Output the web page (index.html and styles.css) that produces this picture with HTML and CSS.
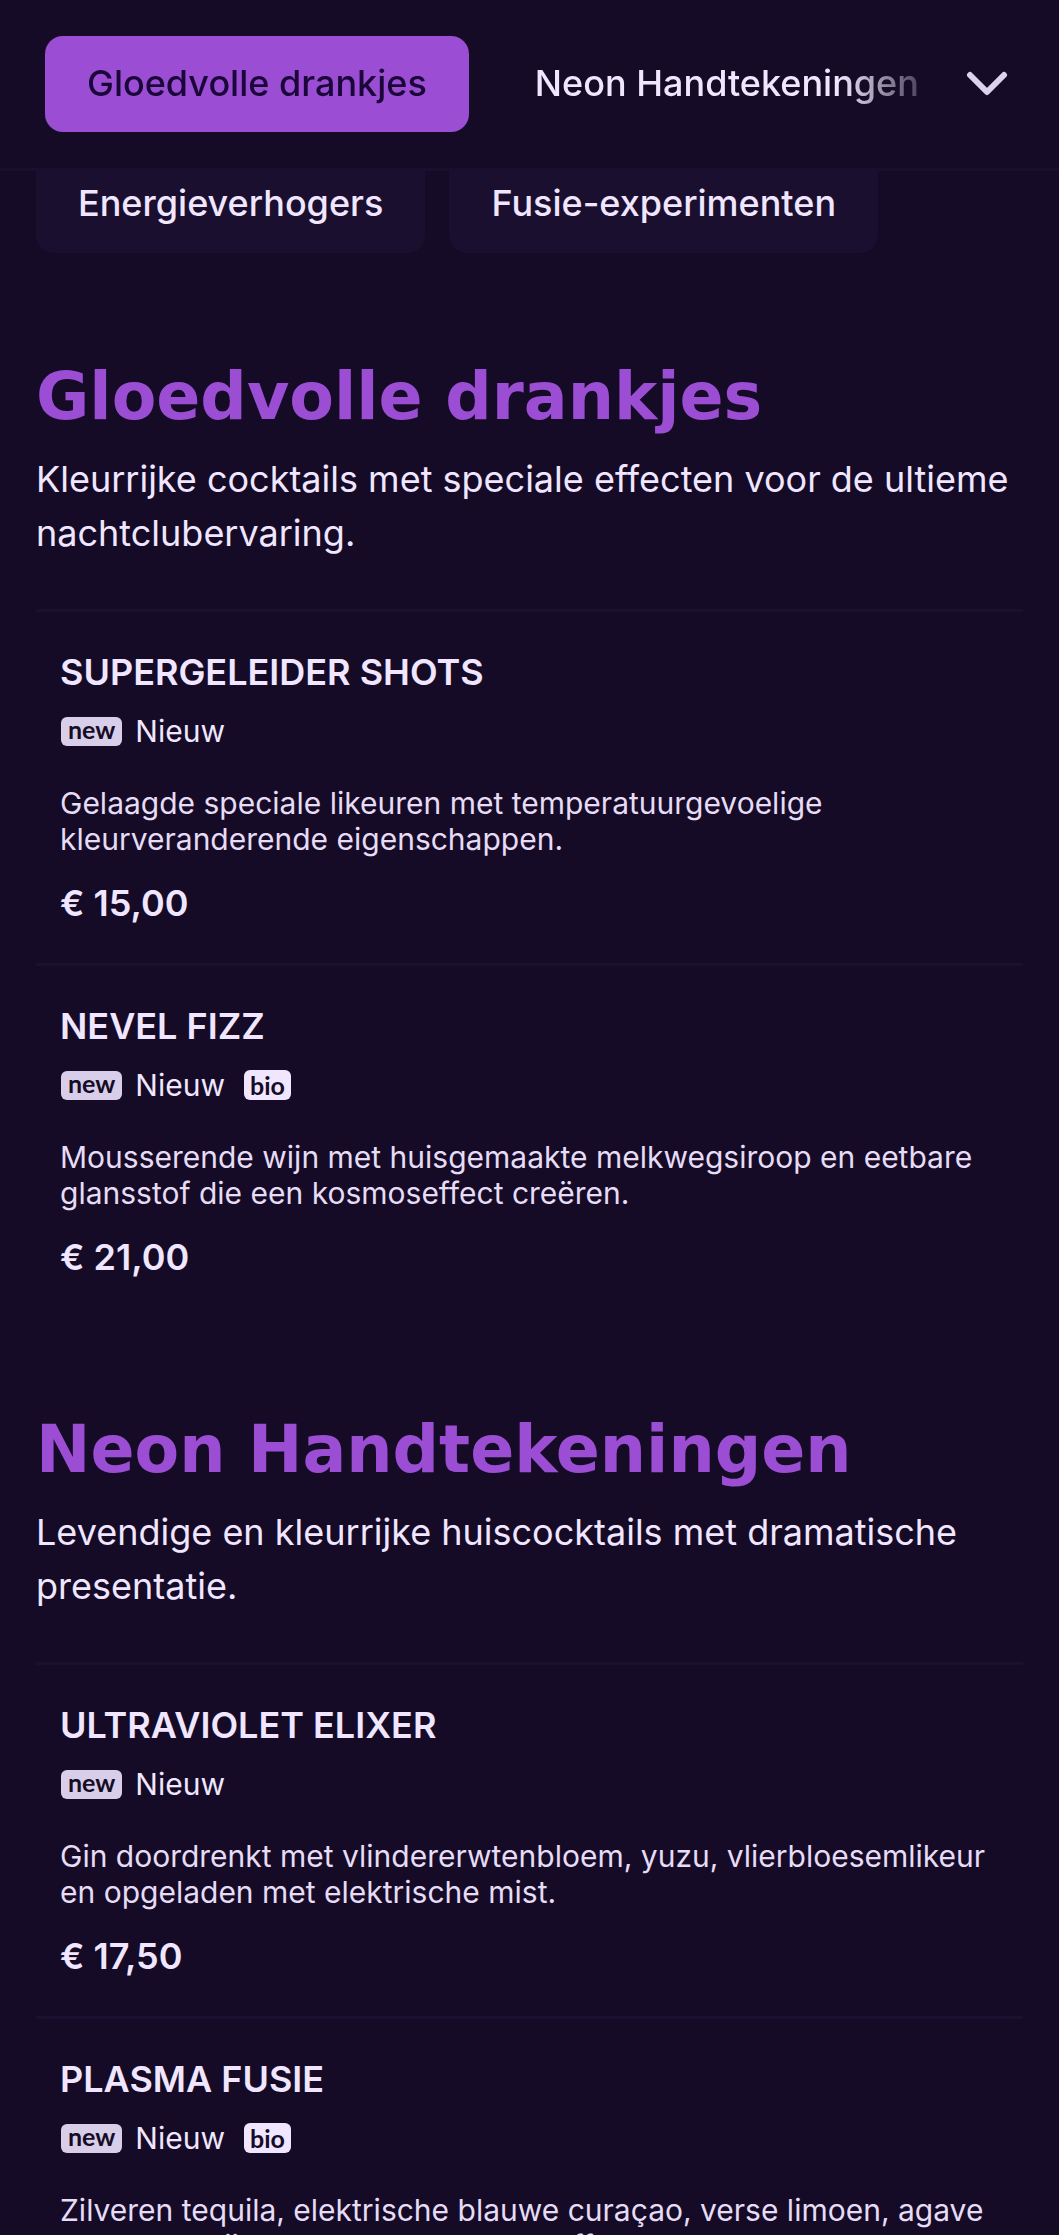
FILE: index.html
```html
<!DOCTYPE html>
<html lang="nl">
<head>
  <meta charset="UTF-8">
  <meta name="viewport" content="width=device-width, initial-scale=1.0">
  <title>Menukaart</title>
  <link rel="stylesheet" href="styles.css">
</head>
<body>

<header class="topbar">
  <nav class="tabs">
    <a class="tab active" href="#gloedvolle-drankjes">Gloedvolle drankjes</a>
    <a class="tab" href="#neon-handtekeningen">Neon Handtekeningen</a>
  </nav>
  <button class="toggle" type="button" aria-label="Alle categorieën">
    <svg width="42" height="26" viewBox="0 0 42 26" fill="none" stroke="currentColor" stroke-width="6" stroke-linecap="round" stroke-linejoin="round"><path d="M4 4l17 17L38 4"/></svg>
  </button>
</header>

<main class="content">
  <nav class="chips">
    <a class="chip" href="#energieverhogers">Energieverhogers</a>
    <a class="chip" href="#fusie-experimenten">Fusie-experimenten</a>
  </nav>

  <section class="category" id="gloedvolle-drankjes">
    <h2 class="title">Gloedvolle drankjes</h2>
    <p class="intro">Kleurrijke cocktails met speciale effecten voor de ultieme nachtclubervaring.</p>

    <article class="item">
      <h3 class="name">Supergeleider shots</h3>
      <div class="labels">
        <span class="badge badge-new">new</span>
        <span class="label-text">Nieuw</span>
      </div>
      <p class="description">Gelaagde speciale likeuren met temperatuurgevoelige kleurveranderende eigenschappen.</p>
      <p class="price">€ 15,00</p>
    </article>

    <article class="item">
      <h3 class="name">Nevel fizz</h3>
      <div class="labels">
        <span class="badge badge-new">new</span>
        <span class="label-text">Nieuw</span>
        <span class="badge badge-bio">bio</span>
      </div>
      <p class="description">Mousserende wijn met huisgemaakte melkwegsiroop en eetbare glansstof die een kosmoseffect creëren.</p>
      <p class="price">€ 21,00</p>
    </article>
  </section>

  <section class="category" id="neon-handtekeningen">
    <h2 class="title">Neon Handtekeningen</h2>
    <p class="intro">Levendige en kleurrijke huiscocktails met dramatische presentatie.</p>

    <article class="item">
      <h3 class="name">Ultraviolet elixer</h3>
      <div class="labels">
        <span class="badge badge-new">new</span>
        <span class="label-text">Nieuw</span>
      </div>
      <p class="description">Gin doordrenkt met vlindererwtenbloem, yuzu, vlierbloesemlikeur en opgeladen met elektrische mist.</p>
      <p class="price">€ 17,50</p>
    </article>

    <article class="item">
      <h3 class="name">Plasma fusie</h3>
      <div class="labels">
        <span class="badge badge-new">new</span>
        <span class="label-text">Nieuw</span>
        <span class="badge badge-bio">bio</span>
      </div>
      <p class="description">Zilveren tequila, elektrische blauwe curaçao, verse limoen, agave en sprankelijs voor een neon gloedeffect.</p>
    </article>
  </section>
</main>

</body>
</html>
```
FILE: styles.css
```css
* {
  box-sizing: border-box;
}

body {
  margin: 0;
  height: 100vh;
  overflow: hidden;
  background-color: #150b26;
  color: #f0e6ff;
  font-family: Inter, sans-serif;
  font-size: 36px;
  line-height: 54px;
}

h2, h3, p {
  margin: 0;
}

a {
  color: inherit;
  text-decoration: none;
}

.topbar {
  display: flex;
  align-items: center;
  border-bottom: 3px solid #1a0f2e;
  padding: 36px 45px;
}

/* the tab row fades out towards the toggle */
.tabs {
  display: flex;
  flex: 1;
  gap: 24px;
  min-width: 0;
  overflow: hidden;
  -webkit-mask-image: linear-gradient(to right, #000 calc(100% - 108px), transparent);
  mask-image: linear-gradient(to right, #000 calc(100% - 108px), transparent);
}

.tab {
  flex: none;
  padding: 20px 42px 22px;
  border-radius: 18px;
  font-weight: 500;
  white-space: nowrap;
}

.tab.active {
  background-color: #9b4dd3;
  color: #1a0638;
}

.toggle {
  display: flex;
  margin-left: 12px;
  padding: 4px 6px;
  border: none;
  background: none;
  color: #ddd2ee;
  cursor: pointer;
}

.content {
  padding: 0 36px;
}

.chips {
  display: flex;
  gap: 24px;
  margin-bottom: 105px;
}

.chip {
  padding: 5px 42px 23px;
  border-radius: 0 0 18px 18px;
  background-color: #1a0f2e;
  font-weight: 500;
}

.category {
  margin-bottom: 94px;
}

.title {
  margin-bottom: 16px;
  color: #9b4dd3;
  font-family: "DejaVu Sans", sans-serif;
  font-size: 65px;
  font-weight: 700;
  line-height: 78px;
}

.intro {
  margin-bottom: 49px;
}

.item {
  padding: 33px 24px;
  border-top: 3px solid #1a1030;
}

.name {
  margin-bottom: 2px;
  font-size: 36px;
  font-weight: 600;
  text-transform: uppercase;
}

.labels {
  display: flex;
  align-items: center;
  gap: 13px;
  margin-bottom: 24px;
  padding-left: 1px;
  font-size: 30px;
  line-height: 60px;
}

.badge {
  padding: 0 7px;
  border-radius: 6px;
  color: #150c26;
  font-family: Lato, sans-serif;
  font-size: 25px;
  font-weight: 700;
  line-height: 30px;
}

.badge-new {
  padding-bottom: 4px;
  background-color: #d9cee9;
  line-height: 25px;
}

.badge-bio {
  margin-left: 6px;
  padding: 0 6px;
  background-color: #f0e6ff;
}

.description {
  margin-bottom: 19px;
  color: #e6dcf5;
  font-size: 30px;
  line-height: 36px;
}

.price {
  font-weight: 600;
}
```
